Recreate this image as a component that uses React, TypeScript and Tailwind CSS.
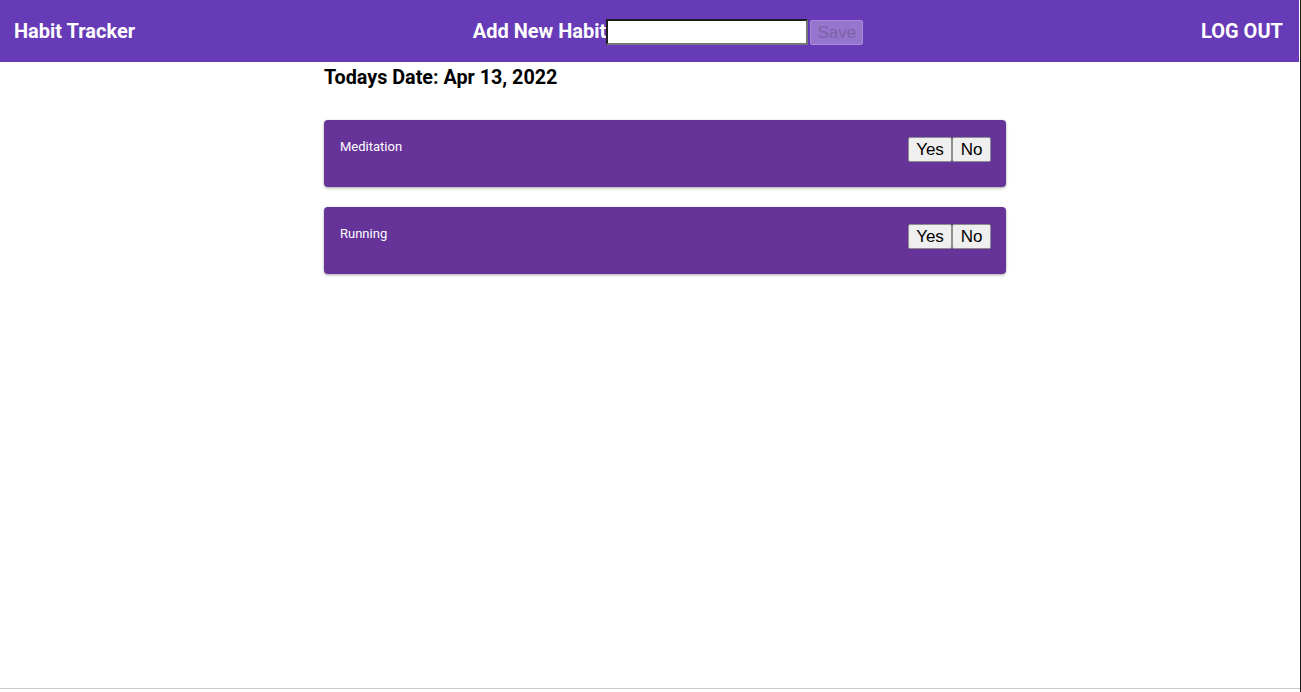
const habits = ["Meditation", "Running"];

function HabitCard({ name }: { name: string }) {
  return (
    <div className="flex justify-between items-start bg-[#663399] rounded shadow-[0_1px_3px_rgba(0,0,0,0.35)] h-[67px] pl-4 pr-[15px] pt-[17px]">
      <span className="text-[13px] font-normal text-white leading-[18px] mt-[1px]">{name}</span>
      <div className="flex">
        <button className="h-[25px] w-[44px] bg-[#efefef] border border-[#8f8f8f] rounded-[2px] text-[17px] leading-none text-black font-['Liberation_Sans',Arial,sans-serif]">
          Yes
        </button>
        <button className="h-[25px] w-[39px] bg-[#efefef] border border-[#8f8f8f] rounded-[2px] text-[17px] leading-none text-black font-['Liberation_Sans',Arial,sans-serif]">
          No
        </button>
      </div>
    </div>
  );
}

export default function App() {
  return (
    <div className="flex font-['Roboto',sans-serif]">
      <div className="w-[1300px] h-[689px] bg-white border-b border-b-[#c8c8c8] flex flex-col">
        {/* Header */}
        <header className="h-[62px] bg-[#673ab7] flex items-center justify-between pl-[14px] pr-[16px] text-white mr-[1px]">
          <h1 className="text-[20px] font-bold">Habit Tracker</h1>
          <div className="flex items-center">
            <span className="text-[20px] font-bold">Add New Habit</span>
            <input
              type="text"
              className="w-[202px] h-[26px] bg-white border-2 border-t-[#1e1e1e] border-l-[#1e1e1e] border-b-[#767676] border-r-[#767676] outline-none mt-[2px]"
            />
            <button
              disabled
              className="ml-[2px] h-[25px] w-[53px] bg-[#9575cd] border border-[#a78bd6] rounded-[2px] text-[17px] text-[#7b62a8] font-['Liberation_Sans',Arial,sans-serif] leading-none mt-[2px]"
            >
              Save
            </button>
          </div>
          <button className="text-[20px] font-bold uppercase">Log Out</button>
        </header>

        {/* Content */}
        <main className="ml-[324px] w-[682px] flex flex-col">
          <h2 className="text-[19.75px] font-bold text-black mt-[3px] leading-[25px]">Todays Date: Apr 13, 2022</h2>
          <div className="flex flex-col gap-[20px] mt-[30px]">
            {habits.map((h) => (
              <HabitCard key={h} name={h} />
            ))}
          </div>
        </main>
      </div>
      <div className="w-[1px] h-[692px] bg-[#1a1a1a]" />
    </div>
  );
}
